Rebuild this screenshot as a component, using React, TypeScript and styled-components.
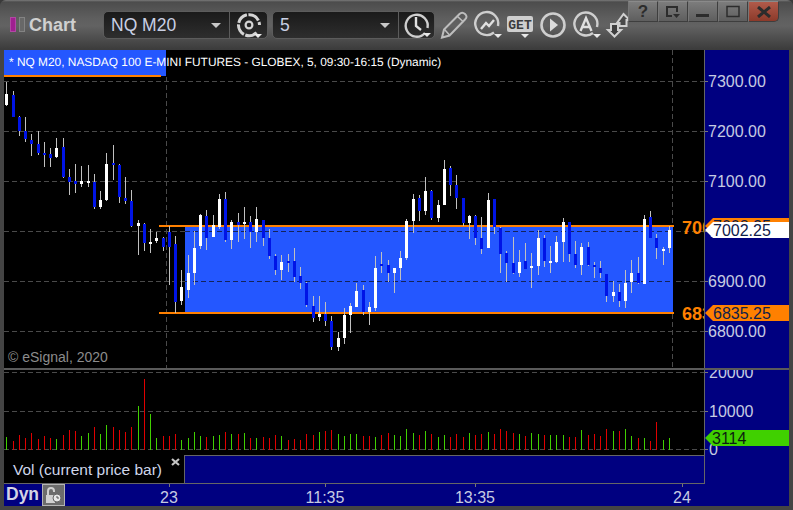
import React from "react";
import styled, { createGlobalStyle } from "styled-components";

const Global = createGlobalStyle`
  html, body { margin: 0; padding: 0; background: #3a3a3a; }
  body { font-family: "Liberation Sans", Arial, sans-serif; }
`;

const NAVY = "#000080";
const AXIS_TEXT = "#c6cbe2";
const ORANGE = "#ff8000";
const GRID = "#4a4a4a";

const Win = styled.div`
  width: 793px; height: 510px; box-sizing: border-box; overflow: hidden;
  display: flex; flex-direction: column; background: #444444;
  padding: 0 4px 4px; border-radius: 6px 6px 0 0;
`;
const TitleBar = styled.div`
  height: 50px; flex: none; margin: 0 -4px; padding-left: 10px; box-sizing: border-box;
  display: flex; align-items: flex-start;
  background: linear-gradient(#7a7a7a 0, #4c4c4c 2px, #5e5e5e 18px, #626262 26px, #3c3c3c 49px);
`;
const LogoBars = styled.div`
  display: flex; gap: 3px; margin-top: 17px; width: 15px; flex: none;
`;
const LogoBar = styled.i<{ $c: string }>`
  display: block; width: 6px; height: 15px; background: ${p => p.$c}; box-sizing: border-box;
  border: 1px solid rgba(255,255,255,.18);
`;
const AppName = styled.div`
  margin: 13px 0 0 4px; width: 74px; flex: none; color: #d0d0d0; font-weight: bold; font-size: 18px; line-height: 24px;
`;
const Combo = styled.div<{ $w: number }>`
  width: ${p => p.$w}px; height: 28px; margin-top: 11px; margin-right: 4px; flex: none; box-sizing: border-box;
  display: flex; border: 1px solid #5c5c5c; border-radius: 5px;
  background: linear-gradient(#1a1a1a, #2e2e2e);
`;
const ComboValue = styled.div`
  flex: 1; display: flex; align-items: center; justify-content: space-between; padding: 0 8px 0 7px;
  color: #c9d0e4; font-size: 17.5px; border-right: 1px solid #5c5c5c;
`;
const Caret = styled.i`
  display: block; width: 0; height: 0; margin-top: 1px;
  border-left: 5px solid transparent; border-right: 5px solid transparent; border-top: 5px solid #c8c8c8;
`;
const ComboIcon = styled.div<{ $w: number }>`
  width: ${p => p.$w}px; flex: none; display: flex; align-items: center; justify-content: center;
`;
const Tools = styled.div`
  display: flex; margin-top: 10px; margin-left: 1px; flex: none; align-items: flex-start;
`;
const ToolIcon = styled.svg<{ $w: number; $ml?: number }>`
  width: ${p => p.$w}px; height: 30px; flex: none; margin-left: ${p => p.$ml ?? 0}px; display: block; overflow: visible;
`;
const Controls = styled.div`
  display: flex; margin-top: 1px; flex: none; position: relative;
`;
const CtlBtn = styled.div<{ $danger?: boolean }>`
  width: ${p => (p.$danger ? 31 : 30)}px; height: 21px; box-sizing: border-box; display: flex;
  align-items: center; justify-content: center;
  border: 1px solid #3e3e3e; border-top-color: #8a8a8a; border-left-color: #777;
  border-radius: ${p => (p.$danger ? "0 0 5px 0" : "0")};
  color: #2c2c2c; font-weight: bold; font-size: 17px;
  background: ${p => (p.$danger ? "linear-gradient(#b05a4a, #8c3a2a)" : "linear-gradient(#7c7c7c, #5e5e5e)")};
`;
const PriceRow = styled.div`
  height: 318px; flex: none; display: flex;
`;
const Plot = styled.div`
  width: 700px; flex: none; background: #000; position: relative; overflow: hidden;
`;
const PlotSvg = styled.svg`
  display: block; width: 700px; height: 100%;
`;
const AxisCol = styled.div`
  flex: 1; background: ${NAVY}; border-left: 1px solid #666; overflow: hidden;
`;
const AxisSvg = styled.svg`
  display: block; width: 84px; height: 100%; overflow: hidden;
`;
const Legend = styled.div`
  position: absolute; left: 0; top: 0; height: 26px; width: 162px; background: #2457ff;
`;
const LegendUnderline = styled.div`
  position: absolute; left: 0; top: 25px; height: 2px; width: 157px; background: ${ORANGE};
`;
const LegendText = styled.div`
  position: absolute; left: 5px; top: 5px; white-space: nowrap; color: #fff; font-size: 11.9px; text-rendering: geometricPrecision; line-height: 15px;
`;
const Copyright = styled.div`
  position: absolute; left: 4px; top: 299px; color: #8c8c8c; font-size: 14px; line-height: 17px;
`;
const Separator = styled.div`
  height: 2px; flex: none; background: #5a5a5a;
`;
const VolRow = styled.div`
  height: 85px; flex: none; display: flex;
`;
const LabelRow = styled.div`
  height: 29px; flex: none; display: flex;
`;
const LabelBox = styled.div`
  width: 180px; flex: none; box-sizing: border-box; background: #000; border-bottom: 1px solid #666;
  display: flex; justify-content: space-between; color: #cfd6ea; font-size: 15.5px;
`;
const LabelText = styled.span`
  margin: 6px 0 0 9px; line-height: 18px; white-space: nowrap;
`;
const CloseMark = styled.svg`
  margin: 3px 4px 0 0; width: 9px; height: 8px; display: block; flex: none;
`;
const LabelFill = styled.div`
  width: 520px; flex: none; box-sizing: border-box; background: ${NAVY};
  border: 1px solid #666; border-width: 1px 0 1px 1px;
`;
const LabelAxisFill = styled.div`
  flex: 1; background: ${NAVY}; border-left: 1px solid #666;
`;
const XRow = styled.div`
  flex: 1; background: ${NAVY}; position: relative; display: flex; align-items: flex-start;
`;
const DynText = styled.span`
  color: #d4d4e4; font-size: 17.5px; font-weight: bold; line-height: 21px; margin-left: 2px; width: 36px; flex: none;
`;
const LockBtn = styled.div`
  width: 23px; height: 22px; box-sizing: border-box; flex: none; border: 1px solid #b4b4b4; background: #6c6c6c;
  display: flex; align-items: center; justify-content: center;
`;
const XSvg = styled.svg`
  position: absolute; left: 0; top: 0; width: 785px; height: 22px;
`;

type C = [string, number, number, number, number];
const a: C[] = [
["W",5,78,42,75],["B",33,110,45,110],["B",108,168,112,153],["B",111,186,154,177],["B",162,228,180,192],["B",153,225,192,219],["B",186,261,219,225],["B",204,261,222,234],["W",174,234,204,231],["B",174,294,201,291],["B",267,345,291,305],["B",252,339,303,312],["W",258,321,303,312],["W",255,321,303,309],["B",282,387,306,381],["W",333,387,360,381],["W",219,363,252,360],["B",195,300,249,255],["B",252,369,255,351],["B",291,372,354,363],["B",330,441,363,438],["W",420,525,429,438],["B",429,513,432,489],["W",447,519,486,492],["W",456,489,474,483],["B",471,513,474,501],["B",438,615,456,501],["B",468,699,492,666],["W",570,675,621,663],["W",525,654,579,630],["W",453,615,504,579],["W",402,507,405,498],["B",390,510,408,474],["W",405,471,435,471],["W",342,447,357,441],["B",336,486,357,480],["W",420,507,426,480],["B",399,486,426,435],["W",381,477,426,432],["B",408,504,426,456],["W",381,486,417,456],
];
const b: C[] = [
["B",210,288,210,264],["B",237,327,264,318],["B",312,375,318,360],["W",315,390,336,360],["B",312,366,333,339],["B",294,396,333,381],["B",351,417,378,399],["B",396,471,399,465],["B",438,516,468,504],["W",438,513,492,501],["B",456,528,492,513],["B",498,600,513,591],["W",546,603,564,591],["W",474,582,495,564],["W",459,549,468,495],["W",399,471,423,471],["B",405,495,420,486],["W",456,525,471,486],["W",318,483,354,474],["B",306,369,342,348],["B",330,396,345,369],["W",354,429,354,369],["W",303,390,324,354],["W",207,330,213,324],["W",132,249,147,213],["B",135,213,144,183],["W",81,195,123,183],["B",120,210,123,204],["W",150,216,165,204],["W",30,165,57,165],["B",48,138,54,105],["B",75,177,105,144],["B",144,228,144,219],["W",195,267,198,219],["B",195,285,198,264],
["B",201,312,264,297],["W",129,294,150,294],["B",147,252,147,231],["B",231,369,234,312],["B",303,396,309,339],["B",261,372,339,369],["W",300,381,336,369],["B",279,357,333,357],["W",309,414,348,354],["W",240,375,264,348],["B",255,351,264,333],["W",288,369,333,339],["W",258,339,276,336],["W",204,336,216,276],["B",216,336,216,312],["B",273,354,312,345],["W",279,375,291,345],["B",276,348,291,345],["B",336,384,345,351],["B",333,384,354,369],["B",372,456,372,438],["W",393,456,426,438],["B",402,471,426,453],["W",360,474,399,453],["W",330,429,369,396],["B",321,402,369,399],["W",195,402,207,402],["B",183,264,201,264],["B",252,327,264,294],["W",291,345,297,303],["W",228,309,240,294],
];
const candles = [
  ...a.map(c => [c[0], 80 + c[1] / 3, 80 + c[2] / 3, 80 + c[3] / 3, 80 + c[4] / 3] as const),
  ...b.map(c => [c[0], 150 + c[1] / 3, 150 + c[2] / 3, 150 + c[3] / 3, 150 + c[4] / 3] as const),
];
const vols: [string, number][] = [
["G",231],["R",243],["R",225],["R",234],["R",219],["R",237],["R",228],["R",234],["G",237],["R",225],["R",210],["R",213],["G",228],["G",219],["R",201],["G",222],["G",195],["R",201],["R",210],["R",216],["R",201],["G",138],["R",57],["G",162],["G",234],["R",228],["R",228],["R",222],["G",240],["G",234],["G",216],["G",228],["R",231],["G",228],["G",225],["R",216],["G",222],["R",222],["G",219],["R",234],["G",234],["R",231],["R",234],["R",225],["G",228],["R",240],["R",237],["R",240],["R",222],["R",225],["G",216],["R",213],["R",210],["G",222],["G",228],["G",222],["G",222],["R",228],["R",228],["G",231],["R",225],["R",219],["G",225],
["G",228],["G",207],["G",219],["R",225],["G",213],["R",222],["G",231],["G",225],["R",231],["R",222],["R",231],["G",219],["R",225],["R",222],["G",216],["R",222],["R",207],["R",213],["R",219],["G",222],["R",228],["G",219],["G",222],["R",225],["G",225],["G",225],["G",225],["R",231],["R",231],["G",210],["R",225],["R",222],["R",228],["R",207],["G",213],["R",213],["G",207],["G",228],["R",234],["G",234],["R",243],["R",186],["G",240],["G",234],
];
const barX = (i: number) => 6 + Math.ceil(6.25 * i);
const gridYs = [81, 131, 181, 231, 281, 331];
const labels = ["7300.00", "7200.00", "7100.00", "7000.00", "6900.00", "6800.00"];

const Gear = () => (
  <ToolIcon $w={30} viewBox="0 0 30 30" fill="none">
    <path d="M22.500 22.500A10.500 10.500 0 1 1 25.500 15" stroke="#d4d4d4" strokeWidth="3" strokeDasharray="12 1.500" />
    <circle cx="15" cy="15" r="3.400" stroke="#d4d4d4" strokeWidth="2.200" />
    <path d="M20 24h8l-4 4z" fill="#ececec" />
  </ToolIcon>
);
const Clock = () => (
  <ToolIcon $w={30} viewBox="0 0 30 30" fill="none">
    <path d="M23 23A11 11 0 1 1 25.500 18" stroke="#cfcfcf" strokeWidth="2.400" />
    <path d="M14 7v9l5 4" stroke="#e0e0e0" strokeWidth="2.400" />
    <path d="M21 23h8l-4 4z" fill="#e8e8e8" />
  </ToolIcon>
);

export default function App() {
  return (
    <Win>
      <Global />
      <TitleBar>
        <LogoBars>
          <LogoBar $c="#a01f90" />
          <LogoBar $c="#686868" />
        </LogoBars>
        <AppName>Chart</AppName>
        <Combo $w={165}>
          <ComboValue>NQ M20<Caret /></ComboValue>
          <ComboIcon $w={37}><Gear /></ComboIcon>
        </Combo>
        <Combo $w={163}>
          <ComboValue>5<Caret /></ComboValue>
          <ComboIcon $w={35}><Clock /></ComboIcon>
        </Combo>
        <Tools>
          <ToolIcon $w={30} viewBox="0 0 30 30" fill="none">
            <path d="M2 27.500l2-8L19.500 4c1.800-1.800 3.500-1.800 5.500 0s2 3.700 0 5.500L9.500 25.500z" stroke="#bdbdbd" strokeWidth="2" />
            <path d="M17.500 6.500l6 5.500M4.500 19.500l5 5.500" stroke="#bdbdbd" strokeWidth="1.600" />
          </ToolIcon>
          <ToolIcon $w={34} $ml={2} viewBox="0 0 34 30" fill="none">
            <path d="M22 22.500A11.500 11.500 0 1 1 26 16" stroke="#cfcfcf" strokeWidth="2.400" />
            <path d="M9 19l5-6 3 3 5-6" stroke="#e0e0e0" strokeWidth="2.400" />
            <path d="M22 24h8l-4 4z" fill="#e8e8e8" />
          </ToolIcon>
          <ToolIcon $w={32} viewBox="0 0 32 30">
            <rect x="1" y="6" width="26" height="16" rx="2" fill="#cfcfcf" />
            <text x="14" y="18.500" textAnchor="middle" fontFamily="Liberation Mono" fontWeight="bold" fontSize="13" fill="#3c3c3c">GET</text>
            <path d="M15 24h8l-4 4z" fill="#e8e8e8" />
          </ToolIcon>
          <ToolIcon $w={33} viewBox="0 0 33 30" fill="none">
            <circle cx="15" cy="15" r="11.500" stroke="#cfcfcf" strokeWidth="2.600" />
            <path d="M12 8.500l8 6.500-8 6.500z" fill="#dcdcdc" />
          </ToolIcon>
          <ToolIcon $w={37} viewBox="0 0 37 30" fill="none">
            <path d="M22 23A11.500 11.500 0 1 1 26 17" stroke="#cfcfcf" strokeWidth="2.400" />
            <path d="M9.500 21L15 8l5.500 13M11.500 17h7" stroke="#e0e0e0" strokeWidth="2.400" />
            <path d="M22 24h8l-4 4z" fill="#e8e8e8" />
          </ToolIcon>
          <ToolIcon $w={20} viewBox="0 0 20 30" fill="none">
            <path d="M15.500 4l6 6h-3v6h-7v-3H9z" fill="#4a4a4a" stroke="#d0d0d0" strokeWidth="2" />
            <path d="M3 14h7v6h3l-6.500 6.500L0 20h3z" fill="#3e3e3e" stroke="#d0d0d0" strokeWidth="2" />
          </ToolIcon>
        </Tools>
        <Controls>
          <CtlBtn>?</CtlBtn>
          <CtlBtn>
            <svg width="16" height="14" viewBox="0 0 16 14" fill="none">
              <path d="M7 11H2V2h10v5" stroke="#2c2c2c" strokeWidth="2" />
              <path d="M8 9h7l-3.500 4z" fill="#2c2c2c" />
            </svg>
          </CtlBtn>
          <CtlBtn>
            <svg width="14" height="14" viewBox="0 0 14 14"><rect x="0" y="9" width="13" height="3" fill="#2c2c2c" /></svg>
          </CtlBtn>
          <CtlBtn>
            <svg width="14" height="14" viewBox="0 0 14 14" fill="none"><rect x="1" y="1.500" width="12" height="10" stroke="#2c2c2c" strokeWidth="1.500" /></svg>
          </CtlBtn>
          <CtlBtn $danger>
            <svg width="14" height="12" viewBox="0 0 14 12"><path d="M1 1l12 10M13 1L1 11" stroke="#2c2c2c" strokeWidth="3" /></svg>
          </CtlBtn>
        </Controls>
      </TitleBar>

      <PriceRow>
        <Plot>
          <PlotSvg viewBox="4 50 700 318" shapeRendering="crispEdges">
            {gridYs.map(y => (
              <line key={y} x1="4" x2="704" y1={y + 0.5} y2={y + 0.5} stroke={GRID} strokeDasharray="5 3" />
            ))}
            <line x1="166.500" x2="166.500" y1="77" y2="368" stroke={GRID} strokeDasharray="5 3" />
            <line x1="672.500" x2="672.500" y1="50" y2="368" stroke={GRID} strokeDasharray="5 3" />
            <rect x="185" y="227" width="488" height="85" fill="#2457ff" />
            <line x1="185" x2="673" y1="231.500" y2="231.500" stroke="#14235a" strokeDasharray="5 3" />
            <line x1="185" x2="673" y1="281.500" y2="281.500" stroke="#14235a" strokeDasharray="5 3" />
            <rect x="159" y="225" width="515" height="2" fill={ORANGE} />
            <rect x="159" y="312" width="515" height="2" fill={ORANGE} />
            {candles.map((c, i) => {
              const x = barX(i);
              return (
                <g key={i}>
                  <rect x={x} y={Math.round(c[1])} width="1" height={Math.round(c[2] - c[1])} fill="#c0c0c0" />
                  <rect x={x - 1} y={Math.round(c[3])} width="3" height={Math.max(1, Math.round(c[4] - c[3]))} fill={c[0] === "W" ? "#ffffff" : "#0014e6"} />
                </g>
              );
            })}
            <text x="682" y="234" fontFamily="Liberation Sans" fontWeight="bold" fontSize="18" fill={ORANGE} shapeRendering="auto">7008.25</text>
            <text x="682" y="320" fontFamily="Liberation Sans" fontWeight="bold" fontSize="18" fill={ORANGE} shapeRendering="auto">6835.25</text>
          </PlotSvg>
          <Legend />
          <LegendUnderline />
          <LegendText>* NQ M20, NASDAQ 100 E-MINI FUTURES - GLOBEX, 5, 09:30-16:15 (Dynamic)</LegendText>
          <Copyright>© eSignal, 2020</Copyright>
        </Plot>
        <AxisCol>
          <AxisSvg viewBox="705 50 84 318">
            {gridYs.map((y, i) => (
              <g key={y}>
                <line x1="705" x2="708" y1={y + 0.5} y2={y + 0.5} stroke="#777" />
                <text x="708" y={y + 6} fontFamily="Liberation Sans" fontSize="16" fill={AXIS_TEXT}>{labels[i]}</text>
              </g>
            ))}
            <path d="M705 226l8-8h76v16h-76z" fill={ORANGE} />
            <text x="713" y="232" fontFamily="Liberation Sans" fontSize="16" fill="#10204a">7008.25</text>
            <path d="M705 230l8-8h76v16h-76z" fill="#ffffff" />
            <text x="713" y="236" fontFamily="Liberation Sans" fontSize="16" fill="#10204a">7002.25</text>
            <path d="M705 313l8-8h76v16h-76z" fill={ORANGE} />
            <text x="713" y="319" fontFamily="Liberation Sans" fontSize="16" fill="#10204a">6835.25</text>
          </AxisSvg>
        </AxisCol>
      </PriceRow>
      <Separator />
      <VolRow>
        <Plot>
          <PlotSvg viewBox="4 370 700 85" shapeRendering="crispEdges">
            {[372, 411, 449].map(y => (
              <line key={y} x1="4" x2="704" y1={y + 0.5} y2={y + 0.5} stroke={GRID} strokeDasharray="5 3" />
            ))}
            {vols.map((v, i) => {
              const top = 360 + v[1] / 3;
              return (
                <rect key={i} x={barX(i)} y={Math.round(top)} width="1" height={450 - Math.round(top)} fill={v[0] === "G" ? "#40d000" : "#e00000"} />
              );
            })}
          </PlotSvg>
        </Plot>
        <AxisCol>
          <AxisSvg viewBox="705 370 84 85">
            {[[372, "20000"], [411, "10000"], [449, "0"]].map(([y, t]) => (
              <g key={t as string}>
                <line x1="705" x2="708" y1={(y as number) + 0.5} y2={(y as number) + 0.5} stroke="#777" />
                <text x="709" y={(y as number) + 6} fontFamily="Liberation Sans" fontSize="16" fill={AXIS_TEXT}>{t}</text>
              </g>
            ))}
            <path d="M705 438l8-8h76v16h-76z" fill="#40d000" />
            <text x="712" y="444" fontFamily="Liberation Sans" fontSize="16" fill="#0c1c10">3114</text>
          </AxisSvg>
        </AxisCol>
      </VolRow>
      <LabelRow>
        <LabelBox>
          <LabelText>Vol (current price bar)</LabelText>
          <CloseMark viewBox="0 0 9 8"><path d="M1 1l7 6M8 1L1 7" stroke="#c4c4c4" strokeWidth="2.200" /></CloseMark>
        </LabelBox>
        <LabelFill />
        <LabelAxisFill />
      </LabelRow>
      <XRow>
        <XSvg viewBox="4 484 785 22">
          {[[169, "23"], [325, "11:35"], [475, "13:35"], [682, "24"]].map(([x, t]) => (
            <g key={t as string}>
              <line x1={(x as number) + 0.5} x2={(x as number) + 0.5} y1="484" y2="487" stroke="#777" />
              <text x={x as number} y="503" textAnchor="middle" fontFamily="Liberation Sans" fontSize="16" fill={AXIS_TEXT}>{t}</text>
            </g>
          ))}
        </XSvg>
        <DynText>Dyn</DynText>
        <LockBtn>
          <svg width="17" height="18" viewBox="0 0 17 18" fill="none">
            <path d="M3 9V5a3 3 0 0 1 6 0v1" stroke="#d0d0d0" strokeWidth="2" />
            <rect x="1" y="9" width="9" height="8" fill="#d0d0d0" />
            <circle cx="12" cy="12" r="4" fill="#e8e8e8" stroke="#666" />
            <path d="M12 10v2h2" stroke="#555" />
          </svg>
        </LockBtn>
      </XRow>
    </Win>
  );
}
